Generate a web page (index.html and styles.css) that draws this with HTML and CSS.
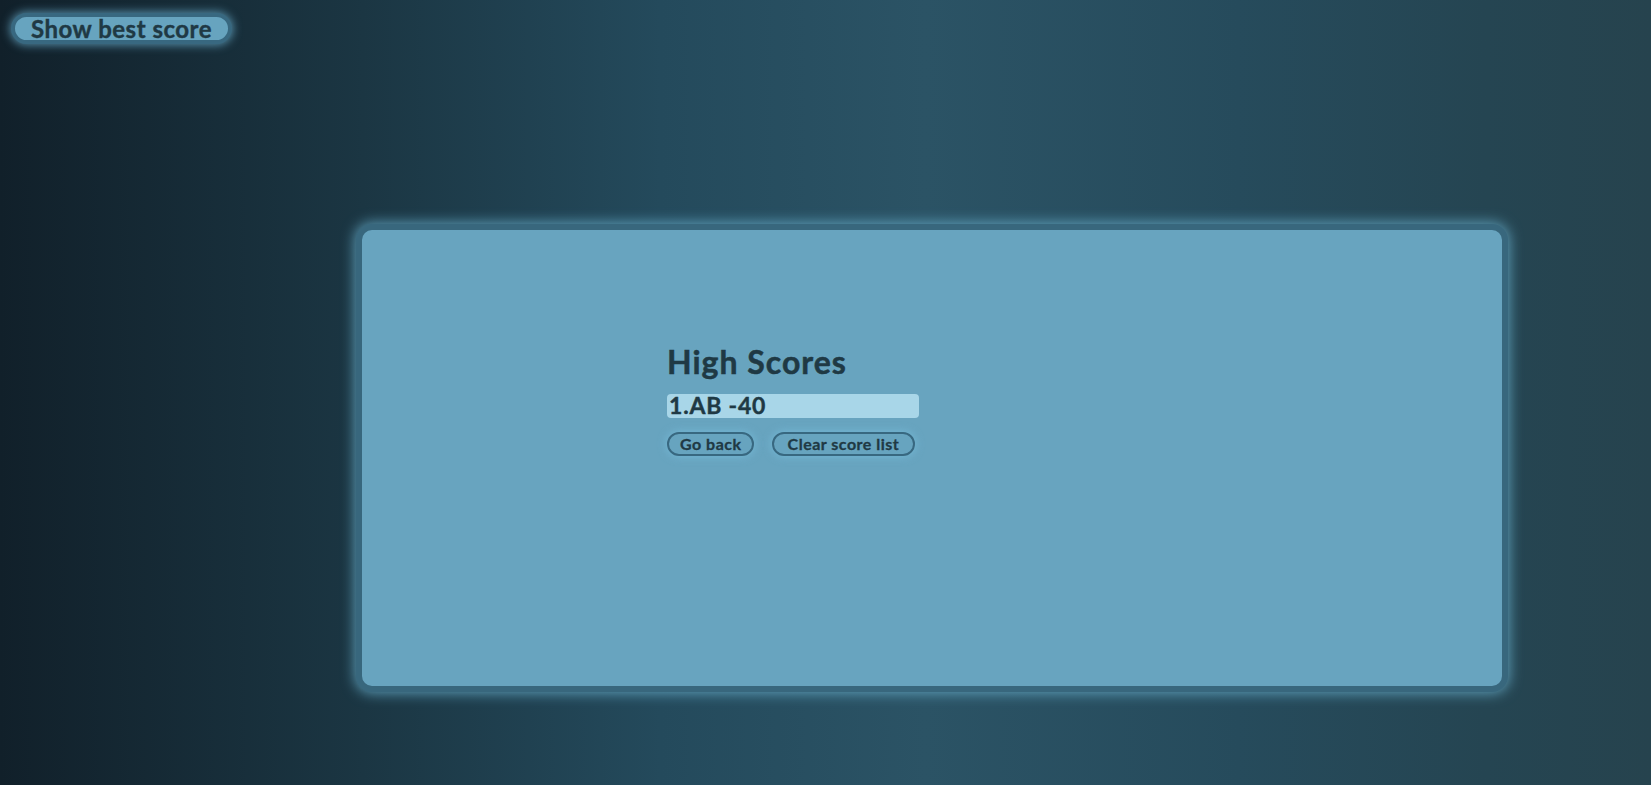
FILE: index.html
```html
<!DOCTYPE html>
<html>
<head>
<meta charset="utf-8">
<link rel="stylesheet" href="styles.css">
</head>
<body>
<button class="best-btn">Show best score</button>
<main class="panel">
  <section class="scores">
    <h1 class="title">High Scores</h1>
    <ol class="list">
      <li class="item">1.AB -40</li>
    </ol>
    <div class="actions">
      <button class="small-btn back-btn">Go back</button>
      <button class="small-btn clear-btn">Clear score list</button>
    </div>
  </section>
</main>
</body>
</html>
```
FILE: styles.css
```css
html, body {
  margin: 0;
  height: 100%;
}
body {
  background: linear-gradient(to right, #11202a 0%, #1b3643 22%, #244a5c 40%, #2b5365 56%, #264b5c 75%, #254552 90%, #26434e 100%);
  font-family: Lato, "Open Sans", sans-serif;
  color: #1f3944;
  overflow: hidden;
  padding: 13px 0 0 11px;
  box-sizing: border-box;
}
.best-btn {
  display: block;
  box-sizing: border-box;
  font-family: Lato, sans-serif;
  font-weight: 700;
  font-size: 24px;
  letter-spacing: 0.5px;
  -webkit-text-stroke: 0.4px #1f3944;
  line-height: 22px;
  height: 31px;
  width: 221px;
  padding: 0;
  color: #1f3944;
  background: #67a4bf;
  border: 4px solid #386880;
  border-radius: 16px;
  box-shadow: 0 0 10px 1px rgba(104, 170, 200, 0.8);
}
.panel {
  margin: 180px 0 0 345px;
  width: 1152px;
  height: 468px;
  box-sizing: border-box;
  background: #68a4bf;
  border: 6px solid #38677d;
  border-radius: 16px;
  box-shadow: 0 0 14px 1px rgba(104, 175, 205, 0.85);
  padding: 113px 0 0 305px;
}
.scores {
  width: 252px;
}
.title {
  margin: 0;
  font-size: 32px;
  font-weight: 700;
  letter-spacing: 1px;
  -webkit-text-stroke: 0.5px #1f3944;
  line-height: 38px;
}
.list {
  list-style: none;
  margin: 13px 0 0 0;
  padding: 0;
}
.item {
  background: #a8d6e8;
  border-radius: 4px;
  height: 24px;
  line-height: 22px;
  font-size: 23px;
  font-weight: 700;
  letter-spacing: 0.8px;
  -webkit-text-stroke: 0.4px #1f3944;
  padding-left: 2px;
}
.actions {
  display: flex;
  gap: 18px;
  margin-top: 14px;
}
.small-btn {
  box-sizing: border-box;
  font-family: Lato, sans-serif;
  font-weight: 700;
  font-size: 16px;
  letter-spacing: 0.5px;
  -webkit-text-stroke: 0.3px #1f3944;
  height: 24px;
  line-height: 18px;
  padding: 0 11px;
  color: #1f3944;
  background: #67a4bf;
  border: 2px solid #386880;
  border-radius: 12px;
  box-shadow: 0 0 8px 1px rgba(120, 190, 220, 0.7);
}
.back-btn {
  padding: 0 10px 0 11px;
}
.clear-btn {
  padding: 0 14px;
}
```
